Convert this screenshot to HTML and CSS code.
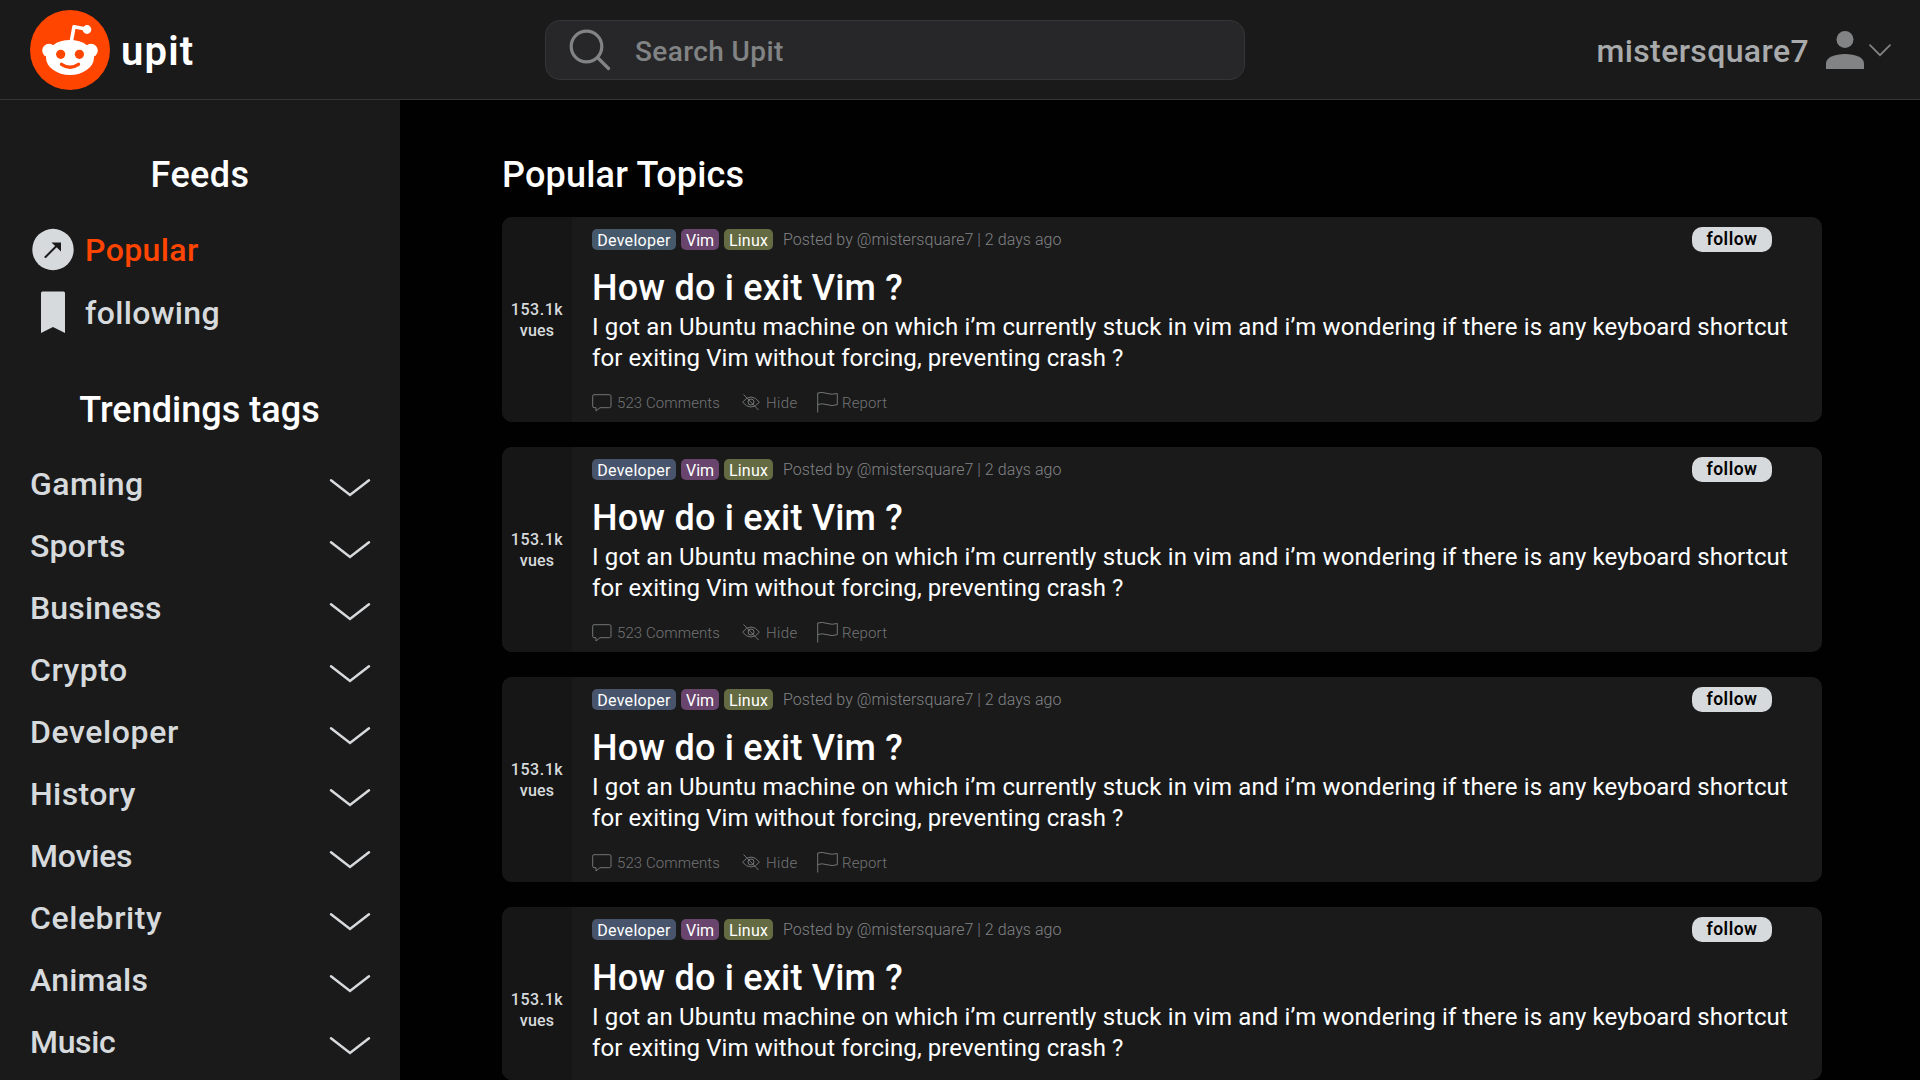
FILE: index.html
```html
<!DOCTYPE html>
<html lang="en">
<head>
<meta charset="utf-8">
<title>upit</title>
<link rel="stylesheet" href="styles.css">
</head>
<body>
<svg class="defs" aria-hidden="true">
  <symbol id="chevron" viewBox="0 0 42 20"><path d="M2 2.2 21 17 40 2.2" fill="none" stroke="currentColor" stroke-width="2.5" stroke-linecap="round"/></symbol>
  <symbol id="comment" viewBox="0 0 20 18"><path d="M2 .7h15.500q1.500 0 1.500 1.500v10q0 1.500-1.500 1.500H8L4 17v-3.300H2q-1.300 0-1.300-1.500v-10Q.7.7 2 .7Z" fill="none" stroke="currentColor"/></symbol>
  <symbol id="hide" viewBox="0 0 18 17"><g fill="none" stroke="currentColor"><path d="M.6 8.200Q4.500 3 9 3t8.400 5.200Q13.500 13 9 13T.6 8.200Z"/><circle cx="9" cy="8" r="3"/><path d="m1.500.5 15 15.500"/></g></symbol>
  <symbol id="flag" viewBox="0 0 21 21"><path d="M.7 20.500V1Q5-.3 10 1.400T20.300 1.500v11.200Q15 14.400 10 12.700T.7 12.500" fill="none" stroke="currentColor"/></symbol>
</svg>

<header class="topbar">
  <a class="brand">
    <svg class="brand-logo" viewBox="0 0 80 80">
      <circle cx="40" cy="40" r="40" fill="#ff4500"/>
      <g fill="#fff">
        <path d="M41.300 31.500 44 16.800 57 19.300" fill="none" stroke="#fff" stroke-width="3.600" stroke-linejoin="round"/>
        <ellipse cx="57" cy="19.500" rx="4.300" ry="4.400"/>
        <circle cx="19" cy="40.500" r="6.800"/><circle cx="61" cy="40.500" r="6.800"/>
        <ellipse cx="40" cy="47.500" rx="24" ry="17.500"/>
      </g>
      <circle cx="30.700" cy="44.300" r="4.600" fill="#ff4500"/><circle cx="49.400" cy="44.300" r="4.600" fill="#ff4500"/>
      <path d="M31.500 54.300q8.500 5.800 17 0" fill="none" stroke="#ff4500" stroke-width="3.300" stroke-linecap="round"/>
    </svg>
    <span class="brand-name">upit</span>
  </a>
  <div class="search">
    <svg class="search-icon" viewBox="0 0 42 42"><g fill="none" stroke="currentColor" stroke-width="3.200" stroke-linecap="round"><circle cx="17.500" cy="17.500" r="15.300"/><path d="m28.500 28.500 11 11"/></g></svg>
    <span class="search-text">Search Upit</span>
  </div>
  <div class="account">
    <span class="account-name">mistersquare7</span>
    <svg class="account-avatar" viewBox="0 0 38 38"><circle cx="19" cy="8.500" r="8.500"/><path d="M0 38v-5.500C0 26.500 8.500 23 19 23s19 3.500 19 9.500V38Z"/></svg>
    <svg class="account-chevron" viewBox="0 0 22 13"><path d="m1 1.200 10 10 10-10" fill="none" stroke="currentColor" stroke-width="1.700" stroke-linecap="round"/></svg>
  </div>
</header>

<div class="layout">
  <aside class="sidebar">
    <h2 class="side-title feeds-title">Feeds</h2>
    <a class="feed active">
      <svg class="feed-icon" viewBox="0 0 42 42"><circle cx="21" cy="20.500" r="20.700" fill="#d7dadc"/><path d="m13.500 28 12-12" stroke="#1a1a1b" stroke-width="2" stroke-linecap="round"/><path d="M19.500 13.500H29v9Z" fill="#1a1a1b"/></svg>
      <span class="feed-popular">Popular</span>
    </a>
    <a class="feed">
      <svg class="feed-icon" viewBox="0 0 42 42"><path d="M10.500.5h21q1.500 0 1.500 1.500v40L21 36 9 42V2Q9 .5 10.500.5Z" fill="#d7dadc"/></svg>
      <span class="feed-following">following</span>
    </a>
    <h2 class="side-title trending-title">Trendings tags</h2>
    <ul class="tag-list" id="tags"></ul>
  </aside>

  <main class="content">
    <h1 class="page-title">Popular Topics</h1>
    <div class="posts" id="posts"></div>
  </main>
</div>

<template id="post">
  <article class="post">
    <div class="views"><span class="views-count">153.1k</span><span class="views-label">vues</span></div>
    <div class="post-body">
      <div class="meta">
        <span class="tag tag-developer">Developer</span><span class="tag tag-vim">Vim</span><span class="tag tag-linux">Linux</span>
        <span class="byline">Posted by @mistersquare7 | 2 days ago</span>
        <button class="follow">follow</button>
      </div>
      <h3 class="post-title">How do i exit Vim ?</h3>
      <p class="post-text">I got an Ubuntu machine on which i’m currently stuck in vim and i’m wondering if there is any keyboard shortcut<br><span class="second-line">for exiting Vim without forcing, preventing crash ?</span></p>
      <div class="actions">
        <span class="action action-comments"><svg class="icon-comment"><use href="#comment"/></svg>523 Comments</span>
        <span class="action action-hide"><svg class="icon-hide"><use href="#hide"/></svg>Hide</span>
        <span class="action action-report"><svg class="icon-flag"><use href="#flag"/></svg>Report</span>
      </div>
    </div>
  </article>
</template>
<script src="app.js"></script>
</body>
</html>
```
FILE: styles.css
```css
* { box-sizing: border-box; margin: 0; padding: 0; }
body { height: 1080px; overflow: hidden; background: #010101; color: #fff; font-family: Roboto, "Noto Sans", sans-serif; }
svg { display: block; flex: none; overflow: visible; }
.defs { position: absolute; width: 0; height: 0; }

.topbar { display: grid; grid-template-columns: 545px 700px 1fr; align-items: center; height: 100px; background: #1a1a1b; border-bottom: 1px solid #343536; }
.brand { display: flex; align-items: center; gap: 11px; padding: 1px 0 0 30px; }
.brand-logo { width: 80px; height: 80px; }
.brand-name { padding-top: 3px; font-size: 40px; font-weight: 600; letter-spacing: 1.2px; line-height: 44px; }
.search { display: flex; align-items: center; height: 60px; margin-top: 1px; padding-left: 23px; background: #272729; border: 1px solid #343536; border-radius: 15px; color: #818384; }
.search-icon { width: 42px; height: 42px; }
.search-text { padding: 2px 0 0 24px; font-size: 28px; font-weight: 500; letter-spacing: .4px; }
.account { display: flex; align-items: center; justify-content: flex-end; padding: 1px 29px 0 0; color: #818384; }
.account-name { padding: 2px 17px 0 0; font-size: 32px; font-weight: 500; letter-spacing: .38px; color: #a8aaab; }
.account-avatar { width: 38px; height: 38px; fill: #818384; }
.account-chevron { width: 22px; height: 13px; margin-left: 5px; }

.layout { display: flex; height: 980px; }
.sidebar { width: 400px; padding: 55px 30px 0; background: #1a1a1b; color: #d7dadc; }
.side-title { font-size: 36px; font-weight: 500; line-height: 40px; text-align: center; color: #fff; }
.feeds-title { margin-bottom: 24px; letter-spacing: .42px; }
.feed { display: flex; align-items: center; gap: 11px; height: 62px; font-size: 32px; font-weight: 500; line-height: 62px; }
.feed-icon { width: 42px; height: 42px; margin-left: 2px; }
.feed.active { color: #ff4500; }
.feed-popular { letter-spacing: .41px; }
.feed-following { padding-top: 1px; letter-spacing: .35px; }
.trending-title { margin: 47px 1px 23px 0; letter-spacing: .03px; }
.tag-list { list-style: none; }
.tag-row { display: flex; align-items: center; justify-content: space-between; height: 62px; font-size: 32px; font-weight: 500; }
.tag-row svg { width: 42px; height: 20px; margin: 8px -1px 0 0; }

.content { flex: 1; padding: 55px 98px 0 102px; }
.page-title { margin-bottom: 22px; font-size: 36px; font-weight: 500; line-height: 40px; letter-spacing: .2px; }
.posts { display: flex; flex-direction: column; gap: 25px; }
.post { display: flex; height: 205px; overflow: hidden; background: #1a1a1b; border-radius: 10px; }
.post:last-child { height: 173px; }
.post:last-child .actions { display: none; }
.views { display: flex; flex-direction: column; align-items: center; justify-content: center; flex: none; width: 70px; height: 205px; background: #161617; color: #d7dadc; font-size: 16px; font-weight: 500; line-height: 21px; }
.views-count { letter-spacing: .54px; }
.views-label { letter-spacing: .2px; }
.post-body { flex: 1; padding: 12px 30px 0 20px; }
.meta { display: flex; align-items: center; height: 21px; margin-bottom: 18px; font-size: 16px; }
.tag { height: 21px; margin-right: 5px; border-radius: 5px; line-height: 23px; text-align: center; }
.tag-developer { width: 84px; background: #47546b; letter-spacing: .31px; }
.post:first-child .tag-developer { background: #46596b; }
.tag-vim { width: 38px; background: #69446c; }
.tag-linux { width: 49px; background: #646b43; letter-spacing: .21px; }
.byline { padding-left: 5px; font-weight: 300; letter-spacing: .04px; color: #818384; }
.follow { width: 80px; height: 25px; margin: 0 20px 0 auto; border: 0; border-radius: 10px; background: #d7dadc; color: #010101; font: 600 17.5px/25px Roboto, sans-serif; letter-spacing: .5px; }
.post-title { margin-bottom: 4px; font-size: 36px; font-weight: 500; line-height: 40px; letter-spacing: .2px; }
.post-text { margin-bottom: 18px; font-size: 24px; line-height: 31px; letter-spacing: .145px; white-space: nowrap; }
.second-line { letter-spacing: .1px; }
.actions { display: flex; align-items: center; height: 22px; color: #727475; font-size: 15px; line-height: 18px; font-weight: 300; letter-spacing: .1px; }
.action { display: flex; align-items: center; }
.action-comments { width: 150px; }
.action-hide { width: 75px; letter-spacing: .4px; }
.action-report { letter-spacing: .15px; }
.icon-comment { width: 20px; height: 18px; margin: -1px 5px 0 0; }
.icon-hide { width: 18px; height: 17px; margin: -1px 6px 0 0; }
.icon-flag { width: 21px; height: 21px; margin: -1px 4px 0 0; }
```
FILE: app.js
```js
// Each tag carries its own tracking, in px.
const tags = [
  ["Gaming", 0.42], ["Sports", 0.15], ["Business", 0.14], ["Crypto", 0.5], ["Developer", 0.6],
  ["History", 0.4], ["Movies", -0.2], ["Celebrity", 0.57], ["Animals", 0.2], ["Music", -0.35],
];
document.getElementById("tags").innerHTML = tags
  .map(([name, tracking]) => `<li class="tag-row"><span style="letter-spacing:${tracking}px">${name}</span><svg><use href="#chevron"/></svg></li>`)
  .join("");

const posts = document.getElementById("posts");
const post = document.getElementById("post");
for (let i = 0; i < 4; i++) posts.append(post.content.cloneNode(true));
```
